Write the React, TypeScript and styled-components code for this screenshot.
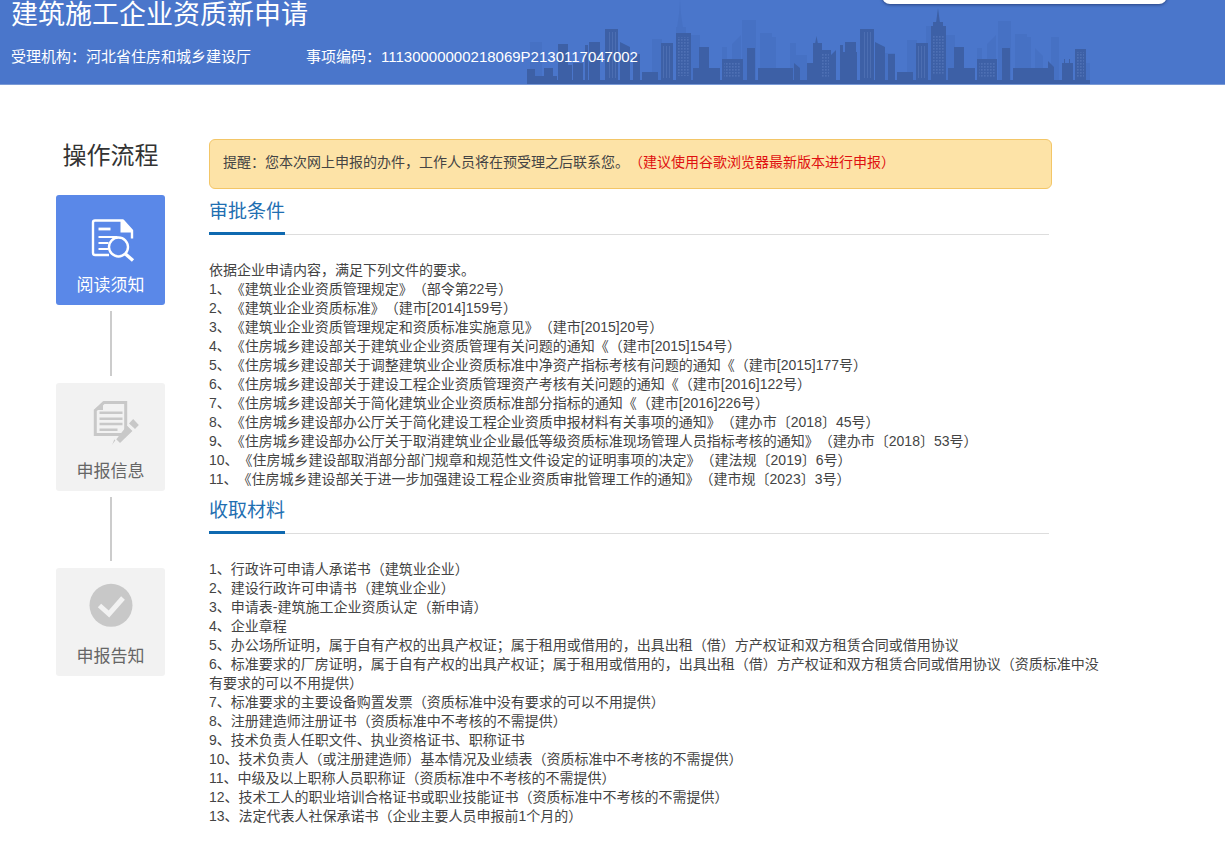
import React from "react";
import styled, { createGlobalStyle } from "styled-components";

const GlobalStyle = createGlobalStyle`
  html, body {
    margin: 0;
    padding: 0;
    background: #fff;
    font-family: "Liberation Sans", "Noto Sans CJK SC", sans-serif;
    text-spacing-trim: space-all;
  }
`;

const conditions = [
  "依据企业申请内容，满足下列文件的要求。",
  "1、《建筑业企业资质管理规定》（部令第22号）",
  "2、《建筑业企业资质标准》（建市[2014]159号）",
  "3、《建筑业企业资质管理规定和资质标准实施意见》（建市[2015]20号）",
  "4、《住房城乡建设部关于建筑业企业资质管理有关问题的通知《（建市[2015]154号）",
  "5、《住房城乡建设部关于调整建筑业企业资质标准中净资产指标考核有问题的通知《（建市[2015]177号）",
  "6、《住房城乡建设部关于建设工程企业资质管理资产考核有关问题的通知《（建市[2016]122号）",
  "7、《住房城乡建设部关于简化建筑业企业资质标准部分指标的通知《（建市[2016]226号）",
  "8、《住房城乡建设部办公厅关于简化建设工程企业资质申报材料有关事项的通知》（建办市〔2018〕45号）",
  "9、《住房城乡建设部办公厅关于取消建筑业企业最低等级资质标准现场管理人员指标考核的通知》（建办市〔2018〕53号）",
  "10、《住房城乡建设部取消部分部门规章和规范性文件设定的证明事项的决定》（建法规〔2019〕6号）",
  "11、《住房城乡建设部关于进一步加强建设工程企业资质审批管理工作的通知》（建市规〔2023〕3号）",
];

const materials = [
  "1、行政许可申请人承诺书（建筑业企业）",
  "2、建设行政许可申请书（建筑业企业）",
  "3、申请表-建筑施工企业资质认定（新申请）",
  "4、企业章程",
  "5、办公场所证明，属于自有产权的出具产权证；属于租用或借用的，出具出租（借）方产权证和双方租赁合同或借用协议",
  "6、标准要求的厂房证明，属于自有产权的出具产权证；属于租用或借用的，出具出租（借）方产权证和双方租赁合同或借用协议（资质标准中没有要求的可以不用提供）",
  "7、标准要求的主要设备购置发票（资质标准中没有要求的可以不用提供）",
  "8、注册建造师注册证书（资质标准中不考核的不需提供）",
  "9、技术负责人任职文件、执业资格证书、职称证书",
  "10、技术负责人（或注册建造师）基本情况及业绩表（资质标准中不考核的不需提供）",
  "11、中级及以上职称人员职称证（资质标准中不考核的不需提供）",
  "12、技术工人的职业培训合格证书或职业技能证书（资质标准中不考核的不需提供）",
  "13、法定代表人社保承诺书（企业主要人员申报前1个月的）",
];

// skyline in page coordinates: [left, right, top]
const backBuildings = [
  [530, 542, 42], [652, 662, 39], [676, 686, 27], [691, 700, 35],
  [722, 727, 47], [742, 756, 20], [760, 772, 33], [772, 776, 37],
  [790, 796, 43], [792, 807, 55], [885, 895, 53], [907, 917, 40],
  [926, 931, 26], [946, 955, 35], [977, 982, 48], [998, 1011, 21],
  [1015, 1027, 34], [1027, 1031, 37], [1051, 1059, 37], [1086, 1090, 63],
];

const frontBuildings = [
  [527, 535, 69], [535, 557, 76], [544, 553, 68], [558, 568, 44],
  [568, 572, 65], [573, 583, 63], [585, 588, 45], [589, 600, 42],
  [605, 618, 29], [633, 640, 54], [642, 658, 72], [661, 673, 43],
  [676, 691, 33], [699, 709, 47], [693, 720, 68], [722, 743, 59],
  [747, 755, 48], [758, 793, 68], [807, 822, 63], [813, 822, 43],
  [820, 831, 50], [840, 857, 52], [845, 856, 42], [840, 843, 45],
  [860, 874, 29], [888, 895, 54], [897, 913, 72], [916, 928, 43],
  [931, 946, 26], [933, 943, 22], [954, 964, 47], [948, 975, 68],
  [977, 997, 59], [1002, 1010, 48], [1013, 1048, 68], [1062, 1073, 63],
  [1075, 1086, 49],
];

const windowBlocks = [
  [678, 689, 37, 76], [933, 944, 36, 74], [724, 741, 62, 78], [979, 995, 62, 78],
  [822, 829, 53, 78], [1077, 1084, 52, 78],
];

const stripeBlocks = [
  [607, 616, 32, 78], [663, 671, 46, 78], [862, 872, 32, 78], [918, 926, 46, 78],
];

const Page = styled.div`
  width: 1225px;
  height: 850px;
  overflow: hidden;
`;

const Header = styled.header`
  position: relative;
  height: 84px;
  padding-left: 11px;
  background: #4a76cb;
  border-bottom: 1px solid #7a9ad6;
  overflow: hidden;
`;

const Title = styled.h1`
  position: relative;
  margin: 0;
  font-size: 27px;
  font-weight: 400;
  line-height: 30px;
  color: #fff;
`;

const Meta = styled.div`
  position: relative;
  display: flex;
  gap: 55px;
  margin-top: 17px;
  font-size: 15px;
  line-height: 19px;
  color: #fff;
`;

const SkylineSvg = styled.svg`
  position: absolute;
  left: 420px;
  bottom: 0;
  width: 680px;
  height: 84px;
`;

const SearchBox = styled.div`
  position: absolute;
  top: -40px;
  left: 882px;
  width: 285px;
  height: 44px;
  background: #fff;
  border-radius: 8px;
  box-shadow: 0 1px 3px rgba(30, 50, 100, 0.7);
`;

const Body = styled.div`
  display: flex;
  padding-top: 54px;
`;

const Sidebar = styled.aside`
  display: flex;
  flex-direction: column;
  align-items: center;
  flex: none;
  width: 109px;
  margin: 0 44px 0 56px;
`;

const SideTitle = styled.div`
  height: 56px;
  font-size: 24px;
  line-height: 34px;
  color: #333;
  white-space: nowrap;
`;

const Step = styled.div<{ $active?: boolean; $h: number }>`
  display: flex;
  flex-direction: column;
  align-items: center;
  justify-content: flex-end;
  box-sizing: border-box;
  width: 109px;
  height: ${(p) => p.$h}px;
  padding-bottom: 7px;
  border-radius: 3px;
  background: ${(p) => (p.$active ? "#5a88e8" : "#f2f2f2")};
  color: ${(p) => (p.$active ? "#fff" : "#666")};
  font-size: 17px;
  line-height: 24px;
`;

const StepIcon = styled.svg`
  width: 64px;
  height: 56px;
  margin-bottom: 6px;
`;

const Connector = styled.div<{ $h: number }>`
  width: 2px;
  height: ${(p) => p.$h}px;
  margin: 6px 0 7px;
  background: #ccc;
`;

const Main = styled.main`
  width: 890px;
`;

const Notice = styled.div`
  box-sizing: border-box;
  width: 843px;
  height: 50px;
  padding-left: 13px;
  border: 1px solid #f3c667;
  border-radius: 6px;
  background: #fde3a7;
  color: #444;
  font-size: 14px;
  line-height: 45px;
`;

const NoticeRed = styled.span`
  color: #e01010;
`;

const SectionHead = styled.div<{ $pull?: number }>`
  width: 840px;
  height: 46px;
  margin-top: ${(p) => p.$pull ?? 0}px;
  box-sizing: border-box;
  border-bottom: 1px solid #ddd;
`;

const SectionTitle = styled.h2`
  display: inline-block;
  box-sizing: border-box;
  height: 46px;
  margin: 0;
  font-size: 19px;
  font-weight: 400;
  line-height: 45px;
  color: #1f6fb2;
  border-bottom: 3px solid #0f69b0;
`;

const Lines = styled.div`
  margin-top: 26px;
  font-size: 14px;
  line-height: 19px;
  color: #444;
`;

function Skyline() {
  return (
    <SkylineSvg viewBox="420 0 680 84" aria-hidden="true">
      <defs>
        <pattern id="win" width="3" height="3" patternUnits="userSpaceOnUse">
          <rect width="1.6" height="1.6" fill="#6f8fd0" opacity="0.35" />
        </pattern>
        <pattern id="stripe" width="3" height="3" patternUnits="userSpaceOnUse">
          <rect width="1" height="3" fill="#6f8fd0" opacity="0.3" />
        </pattern>
      </defs>
      <g fill="#4068b8" opacity="0.35">
        {backBuildings.map(([l, r, t]) => (
          <rect key={`${l}-${t}`} x={l} y={t} width={r - l} height={84 - t} />
        ))}
        <path d="M732 84V44l9-9v49z M987 84V44l9-9v49z M1035 84V48l8 8v28z M677 28l2-14 1-14 1 14 2 14z" />
      </g>
      <g fill="#3d60a6">
        {frontBuildings.map(([l, r, t]) => (
          <rect key={`${l}-${t}`} x={l} y={t} width={r - l} height={84 - t} />
        ))}
        <path d="M620 84V42l10 5v37z M875 84V42l10 5v37z M794 84V63l6 5v16z M831 84V55l5-5v34z M1048 84V61l6 6v17z" />
        <path d="M815 44l1.5-8 1.5 8z M936 23l2-15 2 15z M1064 64v-5h1v5z M1069 64v-5h1v5z" />
        <rect x={527} y={80} width={563} height={4} />
      </g>
      {windowBlocks.map(([l, r, t, b]) => (
        <rect key={l} x={l} y={t} width={r - l} height={b - t} fill="url(#win)" />
      ))}
      {stripeBlocks.map(([l, r, t, b]) => (
        <rect key={l} x={l} y={t} width={r - l} height={b - t} fill="url(#stripe)" />
      ))}
    </SkylineSvg>
  );
}

function ReadIcon() {
  return (
    <StepIcon viewBox="0 0 64 56" fill="none" stroke="#fff" strokeWidth="2.4">
      <path d="M30 43H16a2 2 0 0 1-2-2V10.5a2 2 0 0 1 2-2h28l9 10v8" strokeLinejoin="round" />
      <path d="M41.5 8.5h3l8.5 10v2H41.5z" fill="#fff" stroke="none" />
      <path d="M19.5 17h12" strokeWidth="2.8" />
      <path d="M19.5 25h19M19.5 31h10M19.5 37h9.5" strokeWidth="2" />
      <circle cx="39.5" cy="35" r="9.5" />
      <path d="M46.5 42l7.5 6.5" strokeWidth="3.4" />
    </StepIcon>
  );
}

function FormIcon() {
  return (
    <StepIcon viewBox="0 0 64 56" fill="none">
      <path d="M16.3 12.5L25 4.5H46.7V36.5H16.3Z" stroke="#c8c8c8" strokeWidth="3" />
      <path d="M15 12L24 3.5V12Z" fill="#c8c8c8" />
      <path d="M20.5 14.7h23M20.5 20.7h23M20.5 26h23M20.5 31.7h18" stroke="#c8c8c8" strokeWidth="2.5" />
      <path d="M48.5 27l6 6L41 46l-6-6-3 8" fill="#c8c8c8" stroke="#f2f2f2" strokeWidth="1.5" />
      <path d="M54.2 21l5.6 6-3.8 4-6-5.5z" fill="#c8c8c8" />
    </StepIcon>
  );
}

function CheckIcon() {
  return (
    <StepIcon viewBox="0 0 64 56">
      <circle cx="32" cy="22.3" r="21.5" fill="#c8c8c8" />
      <path d="M20.5 22.5l9.5 8.5 14-16" fill="none" stroke="#f2f2f2" strokeWidth="5" />
    </StepIcon>
  );
}

export default function App() {
  return (
    <Page>
      <GlobalStyle />
      <Header>
        <Skyline />
        <Title>建筑施工企业资质新申请</Title>
        <Meta>
          <span>受理机构：河北省住房和城乡建设厅</span>
          <span>事项编码：11130000000218069P2130117047002</span>
        </Meta>
        <SearchBox />
      </Header>
      <Body>
        <Sidebar>
          <SideTitle>操作流程</SideTitle>
          <Step $active $h={110}>
            <ReadIcon />
            阅读须知
          </Step>
          <Connector $h={65} />
          <Step $h={108}>
            <FormIcon />
            申报信息
          </Step>
          <Connector $h={64} />
          <Step $h={108}>
            <CheckIcon />
            申报告知
          </Step>
        </Sidebar>
        <Main>
          <Notice>
            提醒：您本次网上申报的办件，工作人员将在预受理之后联系您。
            <NoticeRed>（建议使用谷歌浏览器最新版本进行申报）</NoticeRed>
          </Notice>
          <SectionHead>
            <SectionTitle>审批条件</SectionTitle>
          </SectionHead>
          <Lines>
            {conditions.map((t) => (
              <div key={t}>{t}</div>
            ))}
          </Lines>
          <SectionHead $pull={-1}>
            <SectionTitle>收取材料</SectionTitle>
          </SectionHead>
          <Lines>
            {materials.map((t) => (
              <div key={t}>{t}</div>
            ))}
          </Lines>
        </Main>
      </Body>
    </Page>
  );
}
